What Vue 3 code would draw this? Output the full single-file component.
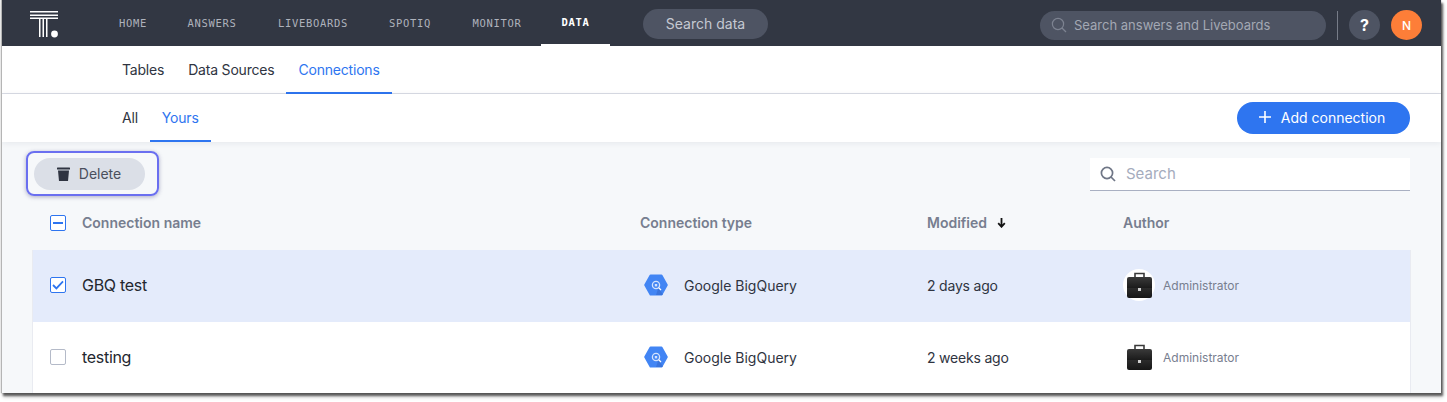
<script setup>
const navItems = [
  { label: 'HOME', width: 64 },
  { label: 'ANSWERS', width: 94 },
  { label: 'LIVEBOARDS', width: 108 },
  { label: 'SPOTIQ', width: 86 },
  { label: 'MONITOR', width: 88 },
  { label: 'DATA', width: 69, active: true }
]

const rows = [
  { name: 'GBQ test', modified: '2 days ago', selected: true },
  { name: 'testing', modified: '2 weeks ago', selected: false }
]
</script>

<template>
  <div class="page">
    <div class="window">
      <!-- TOP BAR -->
      <header class="topbar">
        <svg class="logo" width="30" height="30" viewBox="0 0 30 30">
          <g fill="#fff">
            <rect x="1" y="3" width="28" height="1.5" />
            <rect x="1" y="6.500" width="28" height="1.500" />
            <rect x="1" y="9.500" width="28" height="1.500" />
            <rect x="10" y="10" width="1.500" height="19" />
            <rect x="13.500" y="10" width="1.500" height="19" />
            <rect x="17" y="10" width="1.500" height="19" />
            <circle cx="25.500" cy="26" r="3.400" />
          </g>
        </svg>
        <nav class="nav">
          <a
            v-for="item in navItems"
            :key="item.label"
            class="nav-item"
            :class="{ active: item.active }"
            :style="{ width: item.width + 'px' }"
          >{{ item.label }}</a>
        </nav>
        <div class="search-data">Search data</div>
        <div class="global-search">
          <svg width="16" height="16" viewBox="0 0 16 16" fill="none" stroke="#7d8391" stroke-width="1.2">
            <circle cx="7" cy="7" r="5.600" />
            <path d="M11 11l4 4" />
          </svg>
          <span>Search answers and Liveboards</span>
        </div>
        <div class="divider"></div>
        <div class="help">?</div>
        <div class="avatar">N</div>
      </header>

      <!-- SUB NAV -->
      <div class="tabs">
        <a class="tab">Tables</a>
        <a class="tab">Data Sources</a>
        <a class="tab active">Connections</a>
      </div>

      <div class="subtabs">
        <a class="subtab">All</a>
        <a class="subtab active">Yours</a>
        <button class="add-btn">
          <svg width="14" height="14" viewBox="0 0 14 14" stroke="#fff" stroke-width="1.6">
            <path d="M7 1v12M1 7h12" />
          </svg>
          Add connection
        </button>
      </div>

      <!-- CONTENT -->
      <main class="content">
        <div class="toolbar">
          <div class="highlight">
            <button class="delete-btn">
              <svg width="13" height="14" viewBox="0 0 13 14" fill="#2f3441">
                <rect x="0" y="0.500" width="13" height="2" rx="0.500" />
                <path d="M1 3.500h11l-1 10.500H2z" />
              </svg>
              Delete
            </button>
          </div>
          <div class="search">
            <svg width="16" height="16" viewBox="0 0 16 16" fill="none" stroke="#6f7686" stroke-width="1.7">
              <circle cx="7" cy="7" r="5.600" />
              <path d="M11 11l4 4" />
            </svg>
            <span>Search</span>
          </div>
        </div>

        <div class="table">
          <div class="row head">
            <div class="name-cell">
              <span class="check checked">
                <svg width="10" height="2" viewBox="0 0 10 2"><rect width="10" height="2" fill="#2e75f0" /></svg>
              </span>
              Connection name
            </div>
            <div>Connection type</div>
            <div class="sort">
              Modified
              <svg width="9" height="10" viewBox="0 0 9 10" fill="none" stroke="#111" stroke-width="1.8">
                <path d="M4.500 0v8M1.200 5.200l3.300 3.600 3.300-3.600" />
              </svg>
            </div>
            <div>Author</div>
          </div>

          <div v-for="row in rows" :key="row.name" class="row item" :class="{ selected: row.selected }">
            <div class="name-cell name">
              <span class="check" :class="{ checked: row.selected }">
                <svg v-if="row.selected" width="12" height="10" viewBox="0 0 12 10" fill="none" stroke="#2e75f0" stroke-width="1.8">
                  <path d="M1 5l3.400 3.400L11 1.400" />
                </svg>
              </span>
              {{ row.name }}
            </div>
            <div class="type-cell">
              <svg width="24" height="22" viewBox="0 0 24 22">
                <polygon points="6.500,1.500 17.500,1.500 22.800,11 17.500,20.500 6.500,20.500 1.200,11" fill="#4285f4" stroke="#4285f4" stroke-width="2" stroke-linejoin="round" />
                <polygon points="14.500,13.500 19,20.500 17.500,21 12,21" fill="#3a74dc" />
                <circle cx="12" cy="11" r="3.600" fill="none" stroke="#d5e3fc" stroke-width="1.300" />
                <path d="M14.600 13.600l2.400 2.400" stroke="#fff" stroke-width="1.300" />
                <rect x="10.800" y="10" width="2.400" height="2.400" fill="#d5e3fc" />
              </svg>
              Google BigQuery
            </div>
            <div class="modified-cell">{{ row.modified }}</div>
            <div class="author-cell">
              <span class="author-pic">
                <svg width="25" height="26" viewBox="0 0 25 26">
                  <defs>
                    <linearGradient id="case" x1="0" y1="0" x2="0" y2="1">
                      <stop offset="0" stop-color="#3a3a3a" />
                      <stop offset="0.500" stop-color="#1c1c1c" />
                      <stop offset="0.520" stop-color="#2c2c2c" />
                      <stop offset="1" stop-color="#161616" />
                    </linearGradient>
                  </defs>
                  <path d="M8 5V1.500h9V5" fill="none" stroke="#3a3a3a" stroke-width="1.600" />
                  <rect x="0" y="5" width="25" height="21" rx="2" fill="url(#case)" />
                  <rect x="11" y="16" width="3" height="3" fill="#cfcfcf" />
                </svg>
              </span>
              <span class="author-name">Administrator</span>
            </div>
          </div>
        </div>
      </main>
    </div>
  </div>
</template>

<style>
html, body {
  margin: 0;
  background: #fff;
}
</style>

<style scoped>
.page {
  height: 402px;
  padding-left: 1px;
  box-sizing: border-box;
  overflow: hidden;
}

.window {
  width: 1440px;
  height: 393px;
  box-sizing: border-box;
  border-left: 1px solid #b5b5b5;
  box-shadow: 2px 3px 2px rgba(0, 0, 0, 0.55), 0 0 1px rgba(0, 0, 0, 0.4), 2px 4px 4px rgba(0, 0, 0, 0.2);
  overflow: hidden;
  font-family: Inter, "Liberation Sans", sans-serif;
  background: #f6f8fa;
}

/* TOP BAR */
.topbar {
  height: 46px;
  background: #323743;
  display: flex;
  align-items: center;
  margin-left: -1px;
  padding-left: 28px;
}

.logo {
  flex: none;
}

.nav {
  display: flex;
  height: 100%;
  margin-left: 42px;
}

.nav-item {
  box-sizing: border-box;
  height: 100%;
  display: flex;
  align-items: center;
  justify-content: center;
  font-family: "DejaVu Sans Mono", monospace;
  font-size: 10.500px;
  letter-spacing: 0.700px;
  color: #aeb2bc;
}

.nav-item.active {
  color: #fff;
  font-weight: 700;
  border-bottom: 2px solid #fff;
}

.search-data {
  width: 125px;
  height: 30px;
  box-sizing: border-box;
  padding-bottom: 2px;
  margin-left: 33px;
  margin-top: 2px;
  border-radius: 15px;
  background: #4e5463;
  color: #c5c9d2;
  font-size: 14px;
  display: flex;
  align-items: center;
  justify-content: center;
}

.global-search {
  width: 286px;
  height: 29px;
  margin-left: 272px;
  margin-top: 4px;
  box-sizing: border-box;
  padding: 0 0 1px 11px;
  border-radius: 15px;
  background: #4e5463;
  color: #a3a8b3;
  font-size: 13px;
  display: flex;
  align-items: center;
  gap: 7px;
}

.divider {
  width: 1px;
  height: 29px;
  margin-left: 11px;
  margin-top: 4px;
  background: #777c88;
}

.help {
  width: 31px;
  height: 30px;
  margin-left: 11px;
  margin-top: 4px;
  border-radius: 50%;
  background: #4e5463;
  color: #fff;
  font-size: 16px;
  font-weight: 700;
  display: flex;
  align-items: center;
  justify-content: center;
}

.avatar {
  width: 31px;
  height: 30px;
  margin-left: 11px;
  margin-top: 4px;
  border-radius: 50%;
  background: #fd7e38;
  color: #fff;
  font-size: 12px;
  font-weight: 500;
  display: flex;
  align-items: center;
  justify-content: center;
}

/* TABS */
.tabs {
  height: 48px;
  box-sizing: border-box;
  background: #fff;
  border-bottom: 1px solid #dadde5;
  display: flex;
  padding-left: 108px;
}

.tab {
  height: 48px;
  box-sizing: border-box;
  padding: 0 12px 2px;
  font-size: 14px;
  letter-spacing: -0.200px;
  color: #2f3441;
  display: flex;
  align-items: center;
}

.tab.active {
  color: #2e75f0;
  border-bottom: 2px solid #2e75f0;
  padding-bottom: 0;
}

.subtabs {
  height: 48px;
  box-sizing: border-box;
  background: #fff;
  display: flex;
  align-items: center;
  padding-left: 108px;
  padding-right: 31px;
  box-shadow: 0 1px 6px rgba(30, 40, 60, 0.08);
  position: relative;
}

.subtab {
  height: 48px;
  box-sizing: border-box;
  padding: 0 12px 2px;
  font-size: 14px;
  letter-spacing: -0.200px;
  color: #2f3441;
  display: flex;
  align-items: center;
}

.subtab.active {
  color: #2e75f0;
  border-bottom: 2px solid #2e75f0;
  padding-bottom: 0;
}

.add-btn {
  margin-left: auto;
  width: 173px;
  height: 32px;
  border: none;
  border-radius: 16px;
  background: #2e75f0;
  color: #fff;
  font-family: inherit;
  font-size: 14px;
  display: flex;
  align-items: center;
  justify-content: center;
  gap: 9px;
  padding: 0 4px 2px 0;
}

/* CONTENT */
.content {
  height: 251px;
  box-sizing: border-box;
  padding: 9px 31px 0 24px;
}

.toolbar {
  display: flex;
  align-items: center;
  justify-content: space-between;
  height: 44px;
}

.highlight {
  width: 133px;
  height: 45px;
  box-sizing: border-box;
  border: 2px solid #6a6ff0;
  border-radius: 8px;
  box-shadow: 0 1px 4px rgba(60, 60, 120, 0.4);
  padding: 5px 6px;
}

.delete-btn {
  width: 111px;
  height: 32px;
  border: none;
  border-radius: 16px;
  background: #dbdfe7;
  color: #4a4f5c;
  font-family: inherit;
  font-size: 14px;
  display: flex;
  align-items: center;
  justify-content: center;
  gap: 9px;
  padding: 0 1px 0 0;
}

.search {
  width: 320px;
  height: 33px;
  margin-top: 2px;
  box-sizing: border-box;
  padding-left: 10px;
  background: #fff;
  border-bottom: 1px solid #a9b0c2;
  color: #a5acbd;
  font-size: 15px;
  display: flex;
  align-items: center;
  gap: 10px;
}

.table {
  margin-left: 7px;
  width: 1377px;
}

.row {
  display: grid;
  grid-template-columns: 607px 287px 196px 1fr;
  align-items: center;
  font-size: 14px;
}

.row.head {
  height: 55px;
  box-sizing: border-box;
  color: #777e8f;
  font-weight: 600;
}

.row.item {
  height: 72px;
  box-sizing: border-box;
  padding-bottom: 2px;
  background: #fff;
  color: #2f3441;
  box-shadow: 1px 0 0 #e9ebf1, -1px 0 0 #e9ebf1;
}

.row.item.selected {
  background: #e4ebfb;
}

.name-cell {
  display: flex;
  align-items: center;
  gap: 16px;
  padding-left: 17px;
}

.name {
  font-size: 16px;
  font-weight: 400;
  letter-spacing: -0.300px;
  color: #23272f;
}

.check {
  width: 16px;
  height: 16px;
  box-sizing: border-box;
  border: 1px solid #b4bac8;
  border-radius: 2px;
  background: #fff;
  display: flex;
  align-items: center;
  justify-content: center;
}

.check.checked {
  border-color: #2e75f0;
}

.sort {
  display: flex;
  align-items: center;
  gap: 10px;
}

.type-cell {
  display: flex;
  align-items: center;
  gap: 16px;
  padding-left: 4px;
}

.modified-cell {
  letter-spacing: -0.200px;
}

.author-cell {
  display: flex;
  align-items: center;
  gap: 8px;
}

.author-pic {
  width: 32px;
  height: 32px;
  border-radius: 50%;
  background: #fff;
  display: flex;
  align-items: center;
  justify-content: center;
}

.author-name {
  font-size: 12px;
  color: #777e8f;
}
</style>
